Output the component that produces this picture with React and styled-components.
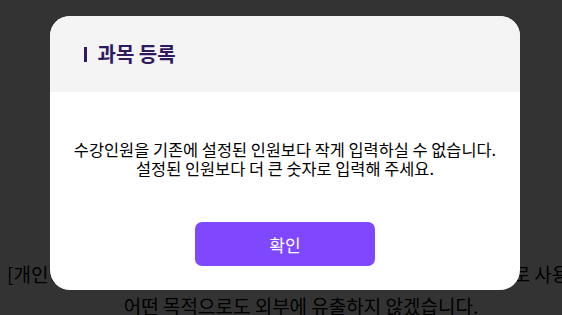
import styled, { createGlobalStyle } from "styled-components";

const GlobalStyle = createGlobalStyle`
  html, body {
    margin: 0;
    padding: 0;
    background: #fff;
    overflow: hidden;
  }
  body {
    font-family: "Noto Sans CJK KR", "Noto Sans", sans-serif;
  }
`;

const Page = styled.div`
  width: 562px;
  height: 315px;
  position: relative;
  overflow: hidden;
  background: #fff;
`;

const Notice = styled.div`
  display: flex;
  flex-direction: column;
  padding-top: 258px;
  font-size: 19px;
  line-height: 32px;
  color: #000;
`;

const NoticeLine = styled.div`
  white-space: nowrap;
  padding-left: ${({ $left }) => ($left ? "7px" : "40px")};
  text-align: ${({ $left }) => ($left ? "left" : "center")};
`;

const Overlay = styled.div`
  position: absolute;
  inset: 0;
  background: rgba(0, 0, 0, 0.8);
  display: flex;
  justify-content: center;
  align-items: flex-start;
  padding: 16px 0 0 8px;
`;

const Modal = styled.div`
  width: 470px;
  background: #fff;
  border-radius: 20px;
  overflow: hidden;
  display: flex;
  flex-direction: column;
`;

const Header = styled.div`
  height: 76px;
  background: #f4f4f4;
  display: flex;
  align-items: center;
  padding-left: 34px;
`;

const Bar = styled.span`
  width: 2.5px;
  height: 15px;
  background: #2f1a62;
  margin-right: 11px;
  margin-top: 1px;
`;

const Title = styled.h2`
  margin: 0;
  font-size: 20px;
  font-weight: 700;
  color: #2f1a62;
  line-height: 1;
`;

const Body = styled.div`
  display: flex;
  flex-direction: column;
  align-items: center;
  padding: 48px 0 24px;
`;

const Message = styled.p`
  margin: 0;
  font-size: 16.4px;
  line-height: 19px;
  color: #000;
  text-align: center;
`;

const ConfirmButton = styled.button`
  margin-top: 44px;
  width: 180px;
  height: 44px;
  border: none;
  border-radius: 7px;
  background: #7f48ff;
  color: #fff;
  font-family: inherit;
  font-size: 17px;
  cursor: pointer;
`;

export default function App() {
  return (
    <>
      <GlobalStyle />
      <Page>
        <Notice>
          <NoticeLine $left>
            [개인정보 수집 및 이용 동의] 수집된 개인정보는 수강 관리 목적으로 사용하며,
          </NoticeLine>
          <NoticeLine>어떤 목적으로도 외부에 유출하지 않겠습니다.</NoticeLine>
        </Notice>
        <Overlay>
          <Modal>
            <Header>
              <Bar />
              <Title>과목 등록</Title>
            </Header>
            <Body>
              <Message>
                수강인원을 기존에 설정된 인원보다 작게 입력하실 수 없습니다.
                <br />
                설정된 인원보다 더 큰 숫자로 입력해 주세요.
              </Message>
              <ConfirmButton>확인</ConfirmButton>
            </Body>
          </Modal>
        </Overlay>
      </Page>
    </>
  );
}
